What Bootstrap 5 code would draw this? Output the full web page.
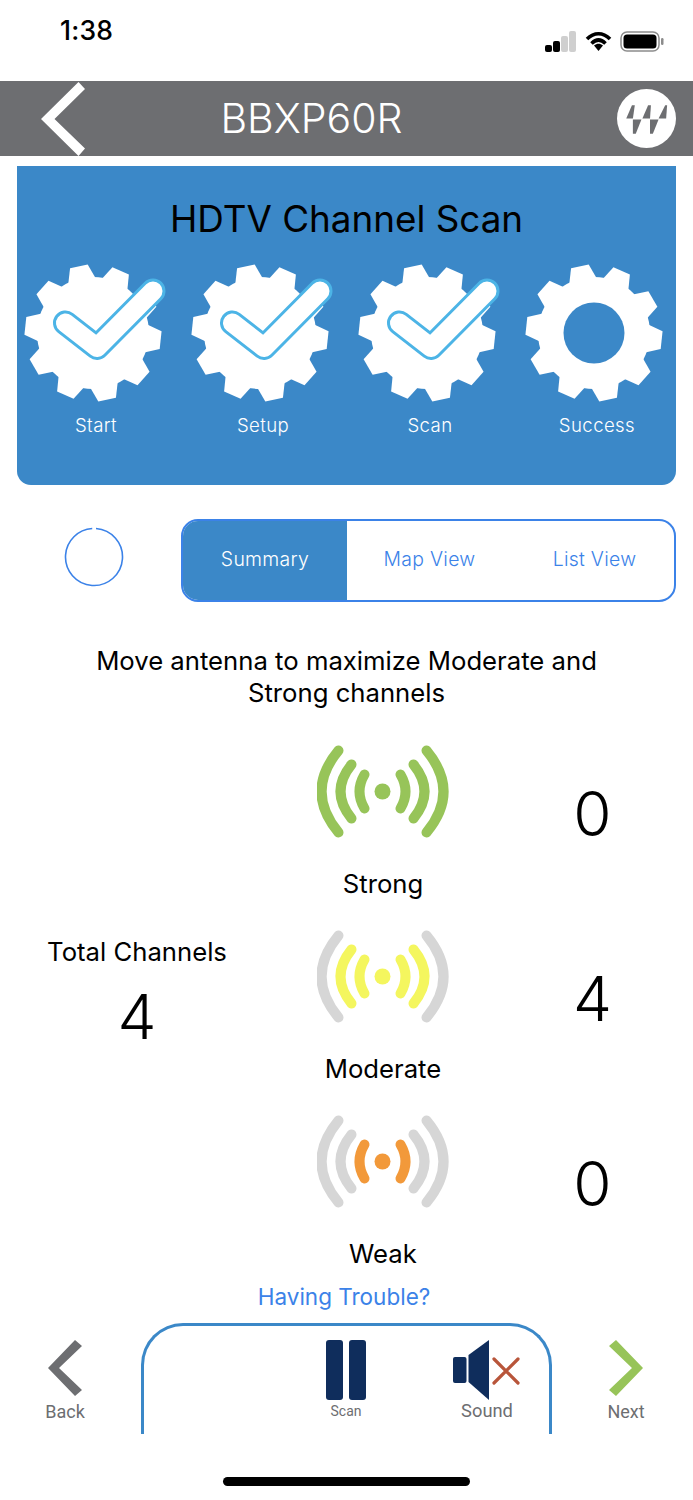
<!DOCTYPE html>
<html lang="en">
<head>
<meta charset="utf-8">
<title>BBXP60R</title>
<link href="https://cdn.jsdelivr.net/npm/bootstrap@5.3.0/dist/css/bootstrap.min.css" rel="stylesheet">
<style>
:root{--scan-blue:#3b88c8;--link-blue:#3b82e8;--hdr-gray:#6d6e71;}
html,body{margin:0;background:#fff;}
body{font-family:Inter,"Liberation Sans",sans-serif;color:#000;}
.screen{width:693px;height:1500px;overflow:hidden;}
.status-row{height:81px;padding:0 28px 0 60px;}
.clock{font-size:26.500px;font-weight:500;line-height:1;margin-top:17px;letter-spacing:.2px;}
.status-icons{margin-top:31px;gap:8px;}
.top-hdr{height:75px;background:var(--hdr-gray);padding:0 17px 0 41px;}
.top-title{font-size:41px;font-weight:300;color:#fff;position:absolute;left:0;width:623px;text-align:center;line-height:75px;}
.hdr-box{position:relative;}
.scan-card{margin:10px 17px 0;height:319px;background:var(--scan-blue);border-radius:0 0 14px 14px;}
.scan-title{font-size:36.800px;font-weight:400;text-align:center;line-height:44px;padding-top:31px;margin-bottom:23px;}
.step-row{padding:0 4px;}
.step-col{width:150px;text-align:center;color:#fff;}
.step-col svg{display:block;}
.step-name{font-size:18.600px;line-height:24px;font-weight:300;margin-top:11px;letter-spacing:.4px;}
.seg-row{margin:34px 17px 0 0;}
.spin-box{width:181px;padding:0 0 8px 64px;}
.seg-box{flex:1;height:83px;border:2px solid var(--link-blue);border-radius:17px;overflow:hidden;}
.seg-item{width:165px;flex:none;text-align:center;font-size:19.400px;font-weight:300;color:var(--link-blue);line-height:77px;letter-spacing:.3px;}
.seg-item.is-on{background:var(--scan-blue);color:#fff;width:164px;}
.move-text{font-size:25.700px;line-height:32px;text-align:center;margin:43px 0 0;padding:0 60px;}
.sig-grid{margin-top:35px;}
.total-col{width:275px;text-align:center;padding:192px 1px 0 0;}
.total-label{font-size:25.700px;line-height:32px;}
.big-num{font-size:62px;font-weight:350;line-height:70px;}
.total-num{margin-top:14px;}
.sig-col{width:216px;}
.sig-row{height:185px;}
.sig-label{font-size:25.700px;line-height:32px;text-align:center;margin-top:29px;}
.sig-col svg{display:block;margin:0 auto;}
.num-col{width:202px;text-align:center;padding-left:1px;}
.num-cell{padding-top:35px;}
.trouble{font-size:22.500px;color:var(--link-blue);text-align:center;line-height:30px;margin-top:-17px;padding-right:5px;}
.bottom-row{margin-top:11px;height:111px;}
.nav-side{text-align:center;color:var(--hdr-gray);font-family:Roboto,"Liberation Sans",sans-serif;font-size:18px;line-height:22px;padding-top:17px;}
.nav-left{width:130px;}
.nav-right{width:130px;margin-left:9px;}
.nav-side svg{display:block;margin:0 auto 5px;}
.mid-tab{width:411px;height:111px;margin-left:11px;border:3px solid var(--scan-blue);border-bottom:0;border-radius:42px 42px 0 0;padding:14px 0 0 152px;gap:41px;}
.mid-item{width:100px;color:var(--hdr-gray);text-align:center;font-family:Roboto,"Liberation Sans",sans-serif;font-size:18.300px;line-height:22px;}
.mid-item svg{display:block;margin:0 auto;}
.scan-small{font-size:15.500px;transform:scaleX(.9);}
.home-bar{width:247px;height:9px;background:#000;border-radius:5px;margin:43px 0 0 223px;}
</style>
</head>
<body>
<div class="screen d-flex flex-column">
  <div class="status-row d-flex justify-content-between align-items-start">
    <div class="clock">1:38</div>
    <div class="status-icons d-flex align-items-start">
      <svg width="32" height="21" viewBox="0 0 32 21"><rect x="0" y="14" width="7" height="7" rx="2"/><rect x="8" y="10" width="7" height="11" rx="2"/><rect x="16" y="5" width="7" height="16" rx="2" fill="#cfcfcf"/><rect x="24" y="0" width="7" height="21" rx="2" fill="#cfcfcf"/></svg>
      <svg width="27" height="21" viewBox="0 0 27 21"><path d="M2 8C9 1 18 1 25 8M6.500 12.500C11 8 16 8 20.500 12.500" fill="none" stroke="#000" stroke-width="3.600"/><path d="M9 14.500C12 12 15 12 18 14.500L13.500 20Z"/></svg>
      <svg width="45" height="21" viewBox="0 0 45 21"><rect x="1" y="1" width="38" height="19" rx="6" fill="none" stroke="#8c8c8c" stroke-width="1.500"/><rect x="3.500" y="3.500" width="33" height="14" rx="3.500"/><rect x="41" y="7" width="2.500" height="7" rx="1.200" fill="#8c8c8c"/></svg>
    </div>
  </div>
  <div class="top-hdr hdr-box d-flex justify-content-between align-items-center">
    <svg width="44" height="74" viewBox="0 0 44 74"><polygon points="37.500,0 44,7 13.500,37 44,66.500 37.500,74 0,37" fill="#fff"/></svg>
    <div class="top-title">BBXP60R</div>
    <svg width="59" height="59" viewBox="-29.500 -29.500 59 59">
      <circle r="29.500" fill="#fff"/>
      <g fill="#6d6e71" transform="translate(-6 1) scale(.95)"><path d="M-15-1-9-15-6-15-8-1Z"/><path d="M-8 0 1 0-5 15-8 15Z"/><path d="M2-1 8-15 11-15 10-1Z"/><path d="M10 0 19 0 13 15 10 15Z"/><path d="M19-1 26-15 28-15 27-1Z"/></g>
    </svg>
  </div>

  <svg width="0" height="0" class="position-absolute">
    <defs>
      <g id="gear-shape">
        <circle r="56" fill="#fff"/>
        <polygon id="gear-tooth" points="-14,-53 -9,-68 9,-68 14,-53" fill="#fff" transform="rotate(-12)"/>
        <use href="#gear-tooth" transform="rotate(36)"/><use href="#gear-tooth" transform="rotate(72)"/><use href="#gear-tooth" transform="rotate(108)"/><use href="#gear-tooth" transform="rotate(144)"/><use href="#gear-tooth" transform="rotate(180)"/><use href="#gear-tooth" transform="rotate(216)"/><use href="#gear-tooth" transform="rotate(252)"/><use href="#gear-tooth" transform="rotate(288)"/><use href="#gear-tooth" transform="rotate(324)"/>
      </g>
      <g id="tick-shape" fill="none" stroke-linecap="round" stroke-linejoin="round">
        <polyline points="-27.500,-10 4,14.500 60,-42" stroke="#4cb4e6" stroke-width="25"/>
        <polyline points="-27.500,-10 4,14.500 60,-42" stroke="#fff" stroke-width="19"/>
      </g>
    </defs>
  </svg>

  <div class="scan-card">
    <div class="scan-title">HDTV Channel Scan</div>
    <div class="step-row d-flex justify-content-between">
      <div class="step-col"><svg width="150" height="138" viewBox="-72 -69 150 138"><use href="#gear-shape"/><use href="#tick-shape"/></svg><div class="step-name">Start</div></div>
      <div class="step-col"><svg width="150" height="138" viewBox="-72 -69 150 138"><use href="#gear-shape"/><use href="#tick-shape"/></svg><div class="step-name">Setup</div></div>
      <div class="step-col"><svg width="150" height="138" viewBox="-72 -69 150 138"><use href="#gear-shape"/><use href="#tick-shape"/></svg><div class="step-name">Scan</div></div>
      <div class="step-col"><svg width="150" height="138" viewBox="-72 -69 150 138"><use href="#gear-shape"/><circle r="30.500" fill="#3b88c8"/></svg><div class="step-name">Success</div></div>
    </div>
  </div>

  <div class="seg-row d-flex">
    <div class="spin-box d-flex align-items-center">
      <svg width="60" height="60" viewBox="-30 -30 60 60"><circle r="28.500" fill="none" stroke="#3b82e8" stroke-width="1.600" stroke-dasharray="175 4" transform="rotate(-86)"/></svg>
    </div>
    <div class="seg-box d-flex">
      <div class="seg-item is-on">Summary</div>
      <div class="seg-item">Map View</div>
      <div class="seg-item">List View</div>
    </div>
  </div>

  <p class="move-text">Move antenna to maximize Moderate and Strong channels</p>

  <div class="sig-grid d-flex">
    <div class="total-col">
      <div class="total-label">Total Channels</div>
      <div class="big-num total-num">4</div>
    </div>
    <div class="sig-col">
      <div class="sig-row">
        <svg width="132" height="95" viewBox="-65.500 -47.500 132 95" fill="none" stroke-width="10" stroke-linecap="round"><path d="M-44-41Q-78 0-44 41M44-41Q78 0 44 41M-31-27Q-53 0-31 27M31-27Q53 0 31 27M-18-17Q-28 0-18 17M18-17Q28 0 18 17" stroke="#97c459"/><circle r="8" fill="#97c459"/></svg>
        <div class="sig-label">Strong</div>
      </div>
      <div class="sig-row">
        <svg width="132" height="95" viewBox="-65.500 -47.500 132 95" fill="none" stroke-width="10" stroke-linecap="round"><path d="M-44-41Q-78 0-44 41M44-41Q78 0 44 41" stroke="#d6d6d6"/><path d="M-31-27Q-53 0-31 27M31-27Q53 0 31 27M-18-17Q-28 0-18 17M18-17Q28 0 18 17" stroke="#f4f65e"/><circle r="8" fill="#f4f65e"/></svg>
        <div class="sig-label">Moderate</div>
      </div>
      <div class="sig-row">
        <svg width="132" height="95" viewBox="-65.500 -47.500 132 95" fill="none" stroke-width="10" stroke-linecap="round"><path d="M-44-41Q-78 0-44 41M44-41Q78 0 44 41M-31-27Q-53 0-31 27M31-27Q53 0 31 27" stroke="#d6d6d6"/><path d="M-18-17Q-28 0-18 17M18-17Q28 0 18 17" stroke="#f2993a"/><circle r="8" fill="#f2993a"/></svg>
        <div class="sig-label">Weak</div>
      </div>
    </div>
    <div class="num-col">
      <div class="sig-row big-num num-cell">0</div>
      <div class="sig-row big-num num-cell">4</div>
      <div class="sig-row big-num num-cell">0</div>
    </div>
  </div>

  <div class="trouble">Having Trouble?</div>

  <div class="bottom-row d-flex">
    <div class="nav-side nav-left">
      <svg width="34" height="56" viewBox="0 0 34 56"><polygon points="27,0 34,6 11,28 34,50 27,56 0,28" fill="#6d6e71"/></svg>
      Back
    </div>
    <div class="mid-tab d-flex">
      <div class="mid-item">
        <svg width="40" height="60" viewBox="0 0 40 60" fill="#0f2d5c"><rect width="17" height="60" rx="3"/><rect x="23" width="17" height="60" rx="3"/></svg>
        <div class="scan-small">Scan</div>
      </div>
      <div class="mid-item">
        <svg width="68" height="60" viewBox="0 0 68 60"><rect x="0" y="17" width="13.500" height="26" rx="2" fill="#0f2d5c"/><polygon points="15.500,15 36,0 36,60 15.500,42" fill="#0f2d5c"/><path d="M41 19 65 43M65 19 41 43" stroke="#b8553a" stroke-width="3.200" stroke-linecap="round"/></svg>
        Sound
      </div>
    </div>
    <div class="nav-side nav-right">
      <svg width="34" height="56" viewBox="0 0 34 56"><polygon points="7,0 34,28 7,56 0,50 23,28 0,6" fill="#97c459"/></svg>
      Next
    </div>
  </div>
  <div class="home-bar"></div>
</div>
<script src="https://cdn.jsdelivr.net/npm/bootstrap@5.3.0/dist/js/bootstrap.bundle.min.js"></script>
</body>
</html>
